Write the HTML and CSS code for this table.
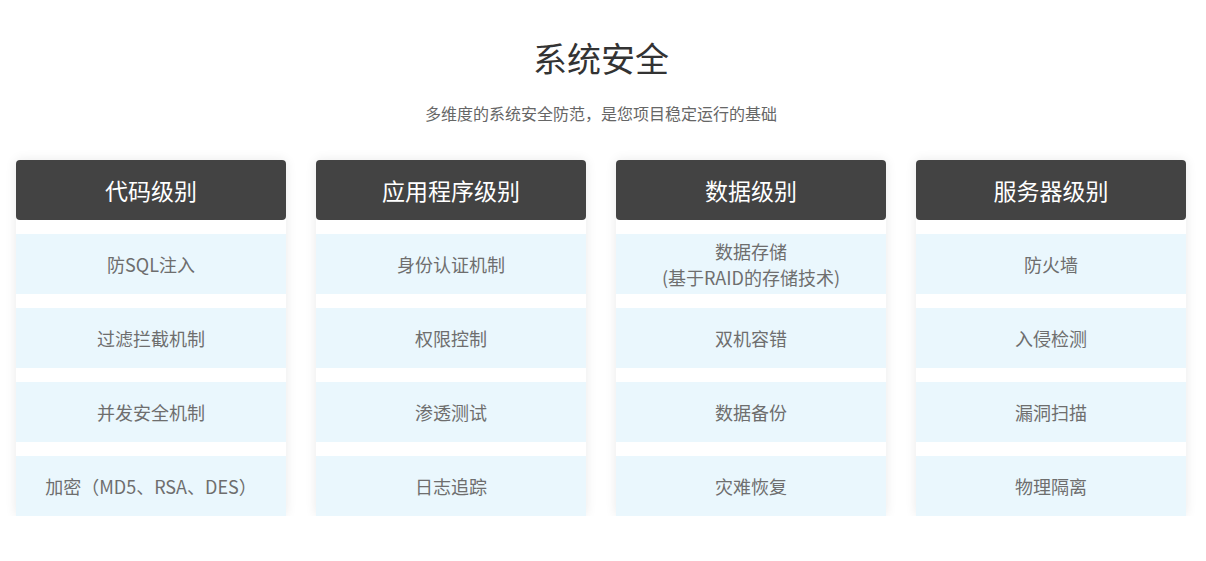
FILE: index.html
```html
<!DOCTYPE html>
<html lang="zh-CN">
<head>
<meta charset="utf-8">
<title>系统安全</title>
<link rel="stylesheet" href="styles.css">
</head>
<body>
<section class="security">
  <h1 class="title">系统安全</h1>
  <p class="subtitle">多维度的系统安全防范，是您项目稳定运行的基础</p>
  <div class="cards">
    <div class="card">
      <div class="card-head">代码级别</div>
      <ul class="items">
        <li>防SQL注入</li>
        <li>过滤拦截机制</li>
        <li>并发安全机制</li>
        <li>加密（MD5、RSA、DES）</li>
      </ul>
    </div>
    <div class="card">
      <div class="card-head">应用程序级别</div>
      <ul class="items">
        <li>身份认证机制</li>
        <li>权限控制</li>
        <li>渗透测试</li>
        <li>日志追踪</li>
      </ul>
    </div>
    <div class="card">
      <div class="card-head">数据级别</div>
      <ul class="items">
        <li>数据存储<br>(基于RAID的存储技术)</li>
        <li>双机容错</li>
        <li>数据备份</li>
        <li>灾难恢复</li>
      </ul>
    </div>
    <div class="card">
      <div class="card-head">服务器级别</div>
      <ul class="items">
        <li>防火墙</li>
        <li>入侵检测</li>
        <li>漏洞扫描</li>
        <li>物理隔离</li>
      </ul>
    </div>
  </div>
</section>
</body>
</html>
```
FILE: styles.css
```css
* { box-sizing: border-box; }
html, body {
  margin: 0;
  padding: 0;
  background: #fff;
}
body {
  font-family: "Noto Sans CJK SC", "Microsoft YaHei", "Noto Sans", sans-serif;
}
.security {
  width: 1170px;
  margin-left: 16px;
  padding-top: 38px;
  text-align: center;
}
.title {
  margin: 0;
  font-size: 34px;
  line-height: 40px;
  font-weight: 400;
  color: #333;
}
.subtitle {
  margin: 25px 0 0;
  font-size: 16px;
  line-height: 20px;
  color: #666;
}
.cards {
  margin-top: 37px;
  display: grid;
  grid-template-columns: repeat(4, 270px);
  column-gap: 30px;
}
.card {
  background: #fff;
  border-radius: 4px;
  box-shadow: 0 0 12px rgba(0, 0, 0, 0.09);
}
.card-head {
  height: 60px;
  line-height: 60px;
  background: #434343;
  border-radius: 4px;
  color: #fff;
  font-size: 23px;
  font-weight: 400;
}
.items {
  list-style: none;
  margin: 0;
  padding: 14px 0 0;
  display: flex;
  flex-direction: column;
  gap: 14px;
}
.items li {
  height: 60px;
  display: flex;
  align-items: center;
  justify-content: center;
  background: #eaf7fd;
  color: #6e6e6e;
  font-size: 18px;
  line-height: 26px;
}
```
